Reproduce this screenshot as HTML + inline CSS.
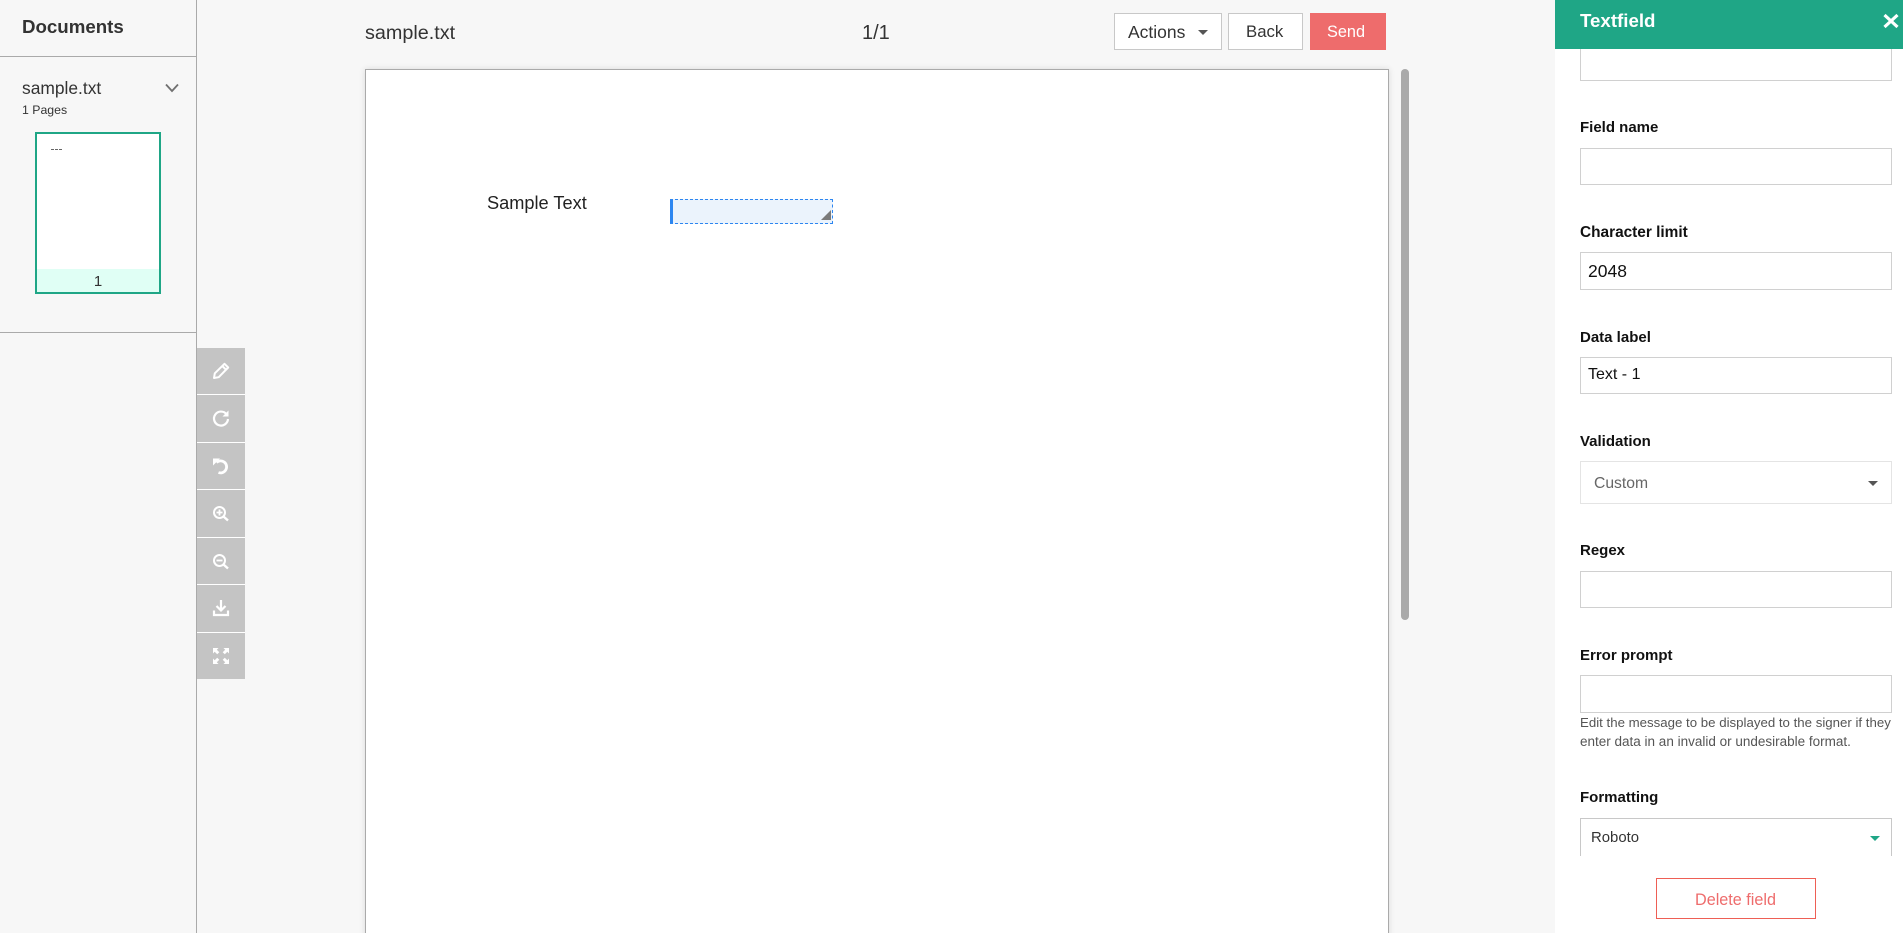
<!DOCTYPE html>
<html lang="en">
<head>
<meta charset="utf-8">
<title>sample.txt</title>
<style>
html,body{margin:0;padding:0;width:1903px;height:933px;overflow:hidden;background:#f7f7f7;font-family:"Liberation Sans",sans-serif;}
#w{position:relative;width:1903px;height:933px;overflow:hidden;}
.a{position:absolute;box-sizing:border-box;}
.t{position:absolute;white-space:nowrap;line-height:20px;height:20px;color:#333;}
.lb{position:absolute;left:1580px;white-space:nowrap;line-height:20px;height:20px;color:#111;font-weight:bold;font-size:15px;}
.in{position:absolute;box-sizing:border-box;left:1580px;width:312px;background:#fff;border:1px solid #d0d0d0;}
.sep{position:absolute;left:197px;width:48px;height:1px;background:#fff;}
svg{position:absolute;overflow:visible;}
</style>
</head>
<body>
<div id="w">
<!-- left sidebar -->
<div class="a" style="left:196px;top:0;width:1px;height:933px;background:#aaa;"></div>
<div class="a" style="left:0;top:56px;width:196px;height:1px;background:#aaa;"></div>
<div class="a" style="left:0;top:332px;width:196px;height:1px;background:#aaa;"></div>
<div class="t" style="left:22px;top:17px;font-size:18.7px;font-weight:bold;">Documents</div>
<div class="t" style="left:22px;top:78px;font-size:17.4px;">sample.txt</div>
<div class="t" style="left:22px;top:100px;font-size:12.3px;">1 Pages</div>
<svg style="left:165px;top:83px;" width="14" height="10" viewBox="0 0 14 10"><path d="M1 1.5L7 8L13 1.5" fill="none" stroke="#707070" stroke-width="1.8"/></svg>
<div class="a" style="left:35px;top:132px;width:126px;height:162px;background:#fff;border:2px solid #1fa686;">
  <div class="a" style="left:0;top:135px;width:122px;height:23px;background:#e0fff5;"></div>
  <div class="a" style="left:14px;top:15px;width:3px;height:1px;background:#666;"></div>
  <div class="a" style="left:18px;top:15px;width:3px;height:1px;background:#666;"></div>
  <div class="a" style="left:22px;top:15px;width:3px;height:1px;background:#666;"></div>
  <div class="t" style="left:0;width:122px;top:138px;text-align:center;font-size:15px;">1</div>
</div>

<!-- toolbar -->
<div class="a" style="left:197px;top:348px;width:48px;height:331px;background:#c4c4c4;"></div>
<div class="sep" style="top:394px;"></div>
<div class="sep" style="top:442px;"></div>
<div class="sep" style="top:489px;"></div>
<div class="sep" style="top:537px;"></div>
<div class="sep" style="top:584px;"></div>
<div class="sep" style="top:632px;"></div>
<svg style="left:213px;top:363px;" width="16" height="16" viewBox="0 0 16 16"><path d="M1 15L1.800 10.300L11.500 0.800L15.200 4.500L5.700 14.200Z M9.300 3L13 6.700" fill="none" stroke="#fff" stroke-width="2" stroke-linejoin="round"/></svg>
<svg style="left:213px;top:410px;" width="16" height="16" viewBox="0 0 16 16"><path d="M13.500 4.200A7 7 0 1 0 15 9" fill="none" stroke="#fff" stroke-width="2.200"/><path d="M15.500 0.500V6.500H9.500Z" fill="#fff"/></svg>
<svg style="left:213px;top:458px;" width="16" height="16" viewBox="0 0 16 16"><path d="M3.500 4.500A6 6 0 1 1 5.500 14.500" fill="none" stroke="#fff" stroke-width="2.800"/><path d="M0 0.500H7L0 7.500Z" fill="#fff"/></svg>
<svg style="left:213px;top:506px;" width="16" height="15" viewBox="0 0 16 15"><circle cx="6.500" cy="6.500" r="5.500" fill="none" stroke="#fff" stroke-width="2"/><path d="M10.500 10.500L15 14.500" stroke="#fff" stroke-width="2.400"/><path d="M3.500 6.500H9.500M6.500 3.500V9.500" stroke="#fff" stroke-width="1.800"/></svg>
<svg style="left:213px;top:554px;" width="16" height="15" viewBox="0 0 16 15"><circle cx="6.500" cy="6.500" r="5.500" fill="none" stroke="#fff" stroke-width="2"/><path d="M10.500 10.500L15 14.500" stroke="#fff" stroke-width="2.400"/><path d="M3.500 6.500H9.500" stroke="#fff" stroke-width="1.800"/></svg>
<svg style="left:213px;top:600px;" width="16" height="16" viewBox="0 0 16 16"><path d="M8 0V10M3.500 6L8 10.500L12.500 6" fill="none" stroke="#fff" stroke-width="2.200"/><path d="M1 10.500V15H15V10.500" fill="none" stroke="#fff" stroke-width="2.200"/></svg>
<svg style="left:213px;top:648px;" width="16" height="16" viewBox="0 0 16 16"><path d="M0 0H5.500L3.800 1.700L6.300 4.200L4.200 6.300L1.700 3.800L0 5.500Z M16 0V5.500L14.300 3.800L11.800 6.300L9.700 4.200L12.200 1.700L10.500 0Z M0 16V10.500L1.700 12.200L4.200 9.700L6.300 11.800L3.800 14.300L5.500 16Z M16 16H10.500L12.200 14.300L9.700 11.800L11.800 9.700L14.300 12.200L16 10.500Z" fill="#fff"/></svg>

<!-- top bar -->
<div class="t" style="left:365px;top:23px;font-size:19.8px;">sample.txt</div>
<div class="t" style="left:862px;top:23px;font-size:20px;">1/1</div>
<div class="a" style="left:1114px;top:13px;width:108px;height:37px;background:#fff;border:1px solid #c8c8c8;"></div>
<div class="t" style="left:1128px;top:22px;font-size:17.5px;">Actions</div>
<svg style="left:1198px;top:30px;" width="10" height="5" viewBox="0 0 10 5"><path d="M0 0H10L5 5Z" fill="#555"/></svg>
<div class="a" style="left:1228px;top:13px;width:75px;height:37px;background:#fff;border:1px solid #c8c8c8;"></div>
<div class="t" style="left:1246px;top:22px;font-size:16.8px;">Back</div>
<div class="a" style="left:1310px;top:13px;width:76px;height:37px;background:#ee6c6c;"></div>
<div class="t" style="left:1327px;top:22px;font-size:16.3px;color:#fff;">Send</div>

<!-- document -->
<div class="a" style="left:365px;top:69px;width:1024px;height:880px;background:#fff;border:1px solid #aaa;box-shadow:0 0 6px rgba(0,0,0,.12);"></div>
<div class="t" style="left:487px;top:193px;font-size:18.2px;color:#222;">Sample Text</div>
<div class="a" style="left:670px;top:199px;width:163px;height:25px;background:#ebf3fc;border:1px dashed #2d86f0;border-left:3px solid #2d86f0;"></div>
<svg style="left:821px;top:210px;" width="10" height="10" viewBox="0 0 10 10"><path d="M0 10L10 0V10Z" fill="#7a7a7a"/></svg>
<div class="a" style="left:1401px;top:69px;width:8px;height:551px;background:#aaa;border-radius:4px;"></div>

<!-- right panel -->
<div class="a" style="left:1555px;top:0;width:348px;height:933px;background:#fff;"></div>
<div class="in" style="top:40px;height:41px;"></div>
<div class="a" style="left:1555px;top:0;width:348px;height:49px;background:#1fa686;"></div>
<div class="t" style="left:1580px;top:11px;font-size:18.7px;font-weight:bold;color:#fff;">Textfield</div>
<svg style="left:1883px;top:14px;" width="16" height="14" viewBox="0 0 16 14"><path d="M1.500 1L14.500 13M14.500 1L1.500 13" stroke="#fff" stroke-width="3.200"/></svg>

<div class="lb" style="top:118px;">Field name</div>
<div class="in" style="top:148px;height:37px;"></div>
<div class="lb" style="top:223px;font-size:15.4px;">Character limit</div>
<div class="in" style="top:252px;height:38px;"></div>
<div class="t" style="left:1588px;top:261px;font-size:17.5px;color:#111;">2048</div>
<div class="lb" style="top:328px;">Data label</div>
<div class="in" style="top:357px;height:37px;"></div>
<div class="t" style="left:1588px;top:365px;font-size:16px;color:#111;">Text - 1</div>
<div class="lb" style="top:432px;">Validation</div>
<div class="in" style="top:461px;height:43px;border-color:#e4e4e4;"></div>
<div class="t" style="left:1594px;top:474px;font-size:15.7px;color:#666;">Custom</div>
<svg style="left:1868px;top:481px;" width="10" height="5" viewBox="0 0 10 5"><path d="M0 0H10L5 5Z" fill="#555"/></svg>
<div class="lb" style="top:541px;">Regex</div>
<div class="in" style="top:571px;height:37px;"></div>
<div class="lb" style="top:646px;">Error prompt</div>
<div class="in" style="top:675px;height:38px;"></div>
<div class="t" style="left:1580px;top:713px;font-size:13.25px;color:#555;">Edit the message to be displayed to the signer if they</div>
<div class="t" style="left:1580px;top:732px;font-size:13.5px;color:#555;">enter data in an invalid or undesirable format.</div>
<div class="lb" style="top:788px;">Formatting</div>
<div class="a" style="left:1580px;top:818px;width:312px;height:38px;background:#fff;border:1px solid #c8c8c8;border-bottom:none;"></div>
<div class="t" style="left:1591px;top:828px;font-size:14.9px;">Roboto</div>
<svg style="left:1870px;top:836px;" width="10" height="5" viewBox="0 0 10 5"><path d="M0 0H10L5 5Z" fill="#1fa686"/></svg>
<div class="a" style="left:1656px;top:878px;width:160px;height:41px;background:#fff;border:1px solid #ee5f55;"></div>
<div class="t" style="left:1695px;top:890px;font-size:16.2px;color:#ee6c6c;">Delete field</div>
</div>
</body>
</html>
